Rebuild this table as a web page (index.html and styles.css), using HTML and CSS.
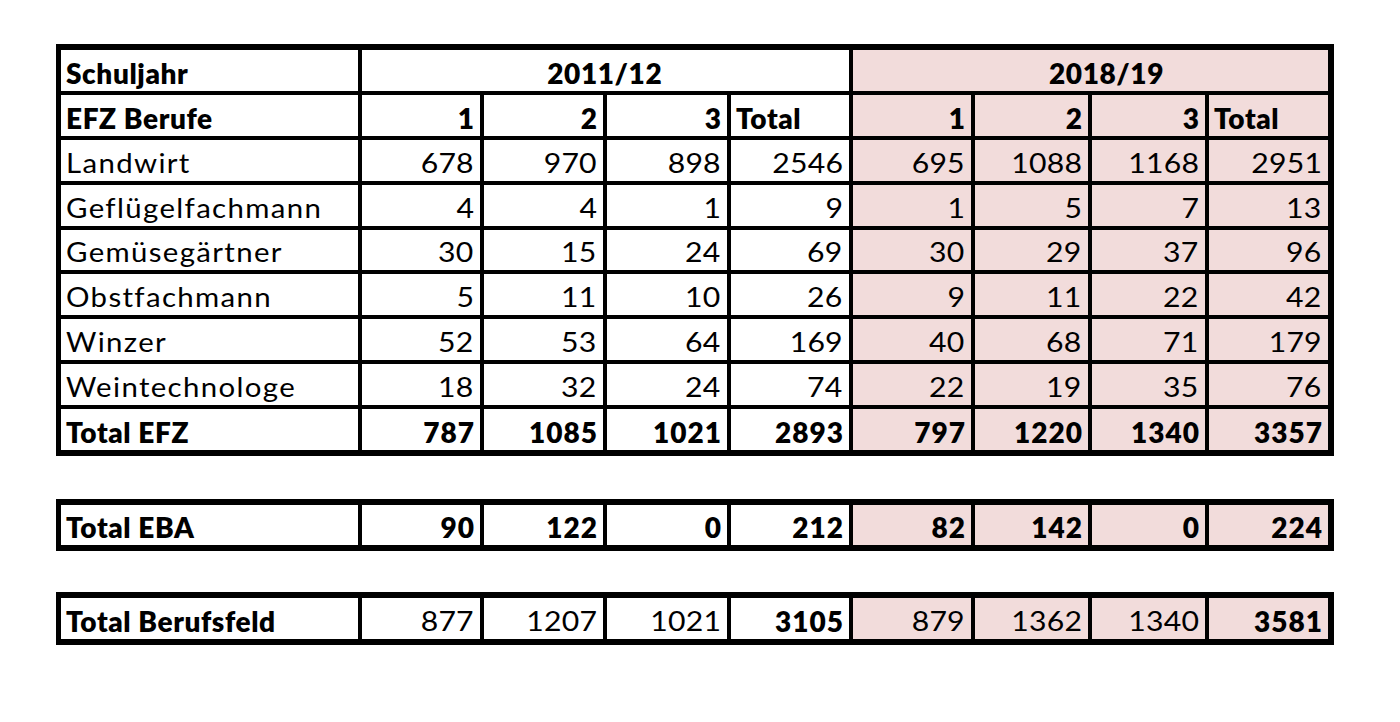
FILE: index.html
```html
<!DOCTYPE html>
<html lang="de">
<head>
<meta charset="utf-8">
<title>Berufsfeld Landwirtschaft</title>
<link rel="stylesheet" href="styles.css">
</head>
<body>
<div class="page">
  <div class="sheet main">
    <div class="c lbl b"><span>Schuljahr</span></div>
    <div class="c span b center"><span>2011/12</span></div>
    <div class="c span b center pk shift"><span>2018/19</span></div>

    <div class="c lbl b"><span>EFZ Berufe</span></div>
    <div class="c n b"><span>1</span></div><div class="c n b"><span>2</span></div><div class="c n b"><span>3</span></div><div class="c b"><span>Total</span></div>
    <div class="c n b pk"><span>1</span></div><div class="c n b pk"><span>2</span></div><div class="c n b pk"><span>3</span></div><div class="c b pk"><span>Total</span></div>

    <div class="c lbl"><span>Landwirt</span></div>
    <div class="c n"><span>678</span></div><div class="c n"><span>970</span></div><div class="c n"><span>898</span></div><div class="c n"><span>2546</span></div>
    <div class="c n pk"><span>695</span></div><div class="c n pk"><span>1088</span></div><div class="c n pk"><span>1168</span></div><div class="c n pk"><span>2951</span></div>

    <div class="c lbl"><span>Geflügelfachmann</span></div>
    <div class="c n"><span>4</span></div><div class="c n"><span>4</span></div><div class="c n"><span>1</span></div><div class="c n"><span>9</span></div>
    <div class="c n pk"><span>1</span></div><div class="c n pk"><span>5</span></div><div class="c n pk"><span>7</span></div><div class="c n pk"><span>13</span></div>

    <div class="c lbl"><span>Gemüsegärtner</span></div>
    <div class="c n"><span>30</span></div><div class="c n"><span>15</span></div><div class="c n"><span>24</span></div><div class="c n"><span>69</span></div>
    <div class="c n pk"><span>30</span></div><div class="c n pk"><span>29</span></div><div class="c n pk"><span>37</span></div><div class="c n pk"><span>96</span></div>

    <div class="c lbl"><span>Obstfachmann</span></div>
    <div class="c n"><span>5</span></div><div class="c n"><span>11</span></div><div class="c n"><span>10</span></div><div class="c n"><span>26</span></div>
    <div class="c n pk"><span>9</span></div><div class="c n pk"><span>11</span></div><div class="c n pk"><span>22</span></div><div class="c n pk"><span>42</span></div>

    <div class="c lbl"><span>Winzer</span></div>
    <div class="c n"><span>52</span></div><div class="c n"><span>53</span></div><div class="c n"><span>64</span></div><div class="c n"><span>169</span></div>
    <div class="c n pk"><span>40</span></div><div class="c n pk"><span>68</span></div><div class="c n pk"><span>71</span></div><div class="c n pk"><span>179</span></div>

    <div class="c lbl"><span>Weintechnologe</span></div>
    <div class="c n"><span>18</span></div><div class="c n"><span>32</span></div><div class="c n"><span>24</span></div><div class="c n"><span>74</span></div>
    <div class="c n pk"><span>22</span></div><div class="c n pk"><span>19</span></div><div class="c n pk"><span>35</span></div><div class="c n pk"><span>76</span></div>

    <div class="c lbl b"><span>Total EFZ</span></div>
    <div class="c n b"><span>787</span></div><div class="c n b"><span>1085</span></div><div class="c n b"><span>1021</span></div><div class="c n b"><span>2893</span></div>
    <div class="c n b pk"><span>797</span></div><div class="c n b pk"><span>1220</span></div><div class="c n b pk"><span>1340</span></div><div class="c n b pk"><span>3357</span></div>
  </div>

  <div class="sheet single eba">
    <div class="c lbl b"><span>Total EBA</span></div>
    <div class="c n b"><span>90</span></div><div class="c n b"><span>122</span></div><div class="c n b"><span>0</span></div><div class="c n b"><span>212</span></div>
    <div class="c n b pk"><span>82</span></div><div class="c n b pk"><span>142</span></div><div class="c n b pk"><span>0</span></div><div class="c n b pk"><span>224</span></div>
  </div>

  <div class="sheet single feld">
    <div class="c lbl b"><span>Total Berufsfeld</span></div>
    <div class="c n"><span>877</span></div><div class="c n"><span>1207</span></div><div class="c n"><span>1021</span></div><div class="c n b"><span>3105</span></div>
    <div class="c n pk"><span>879</span></div><div class="c n pk"><span>1362</span></div><div class="c n pk"><span>1340</span></div><div class="c n b pk"><span>3581</span></div>
  </div>
</div>
</body>
</html>
```

FILE: styles.css
```css
html, body {
  margin: 0;
  padding: 0;
  background: #ffffff;
}

.page {
  padding: 44px 0 0 56px;
  display: flex;
  flex-direction: column;
  align-items: flex-start;
  font-family: Lato, "Open Sans", "Liberation Sans", sans-serif;
  color: #000000;
}

.sheet {
  display: grid;
  grid-template-columns: 296.5px 118.5px 119px 120px 118px 118px 113px 113px 119px;
  grid-auto-rows: 40.9px;
  gap: 4px;
  background: #000000;
  padding: 6px 6px 6px 5px;
}

.eba {
  margin-top: 43px;
  grid-auto-rows: 40px;
}

.feld {
  margin-top: 41px;
  grid-auto-rows: 41px;
}

.c {
  background: #ffffff;
  display: flex;
  align-items: flex-end;
  padding: 0 6px 3px 5px;
  font-size: 26px;
  line-height: 30px;
  white-space: nowrap;
  overflow: hidden;
}

.c > span {
  display: inline-block;
}

.c:not(.b) > span {
  letter-spacing: 1.2px;
  transform: scaleX(1.13);
  transform-origin: left bottom;
}

.c.n:not(.b) > span {
  letter-spacing: 0.2px;
  transform: scaleX(1.16);
  transform-origin: right bottom;
}

.c.pk {
  background: #f2dcdb;
}

.c.b {
  font-weight: 800;
  font-size: 28px;
  letter-spacing: 0.6px;
}

.c.n {
  justify-content: flex-end;
  padding-right: 6px;
}

.c.n.b {
  letter-spacing: 1px;
  padding-right: 5px;
}

.c.span {
  grid-column: span 4;
}

.c.center {
  justify-content: center;
}

.c.shift {
  padding-left: 38px;
}

.c.lbl {
  padding-left: 5px;
}
```
